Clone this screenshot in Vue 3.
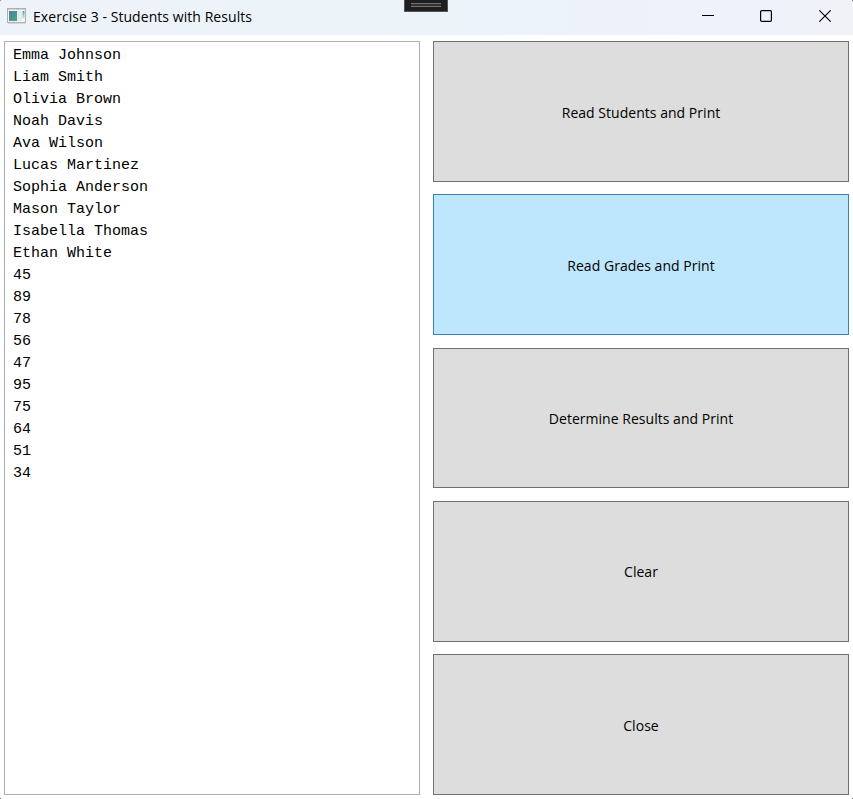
<script setup>
const lines = [
  'Emma Johnson', 'Liam Smith', 'Olivia Brown', 'Noah Davis', 'Ava Wilson',
  'Lucas Martinez', 'Sophia Anderson', 'Mason Taylor', 'Isabella Thomas', 'Ethan White',
  '45', '89', '78', '56', '47', '95', '75', '64', '51', '34',
]
const actions = [
  { label: 'Read Students and Print', cls: 'students' },
  { label: 'Read Grades and Print', cls: 'grades' },
  { label: 'Determine Results and Print', cls: 'results' },
  { label: 'Clear', cls: 'clear' },
  { label: 'Close', cls: 'close' },
]
</script>

<template>
  <div class="window">
    <header class="titlebar">
      <svg class="app-icon" width="20" height="16" viewBox="0 0 20 16">
        <defs>
          <linearGradient id="pane" x1="0" y1="0" x2="1" y2="1">
            <stop offset="0" stop-color="#4a80a8" />
            <stop offset="1" stop-color="#48a67c" />
          </linearGradient>
          <linearGradient id="strip" x1="0" y1="0" x2="0" y2="1">
            <stop offset="0" stop-color="#5a9c98" />
            <stop offset="1" stop-color="#dfeae6" />
          </linearGradient>
        </defs>
        <rect x="0.5" y="0.5" width="18" height="14" fill="#f7f8f8" stroke="#adb0b2" />
        <path d="M1 1.5h17" stroke="#cdd1d3" />
        <path d="M1 15.4h18" stroke="#c9ccd0" stroke-width="0.8" />
        <rect x="2" y="3" width="8" height="10" fill="url(#pane)" />
        <rect x="10" y="3" width="5" height="10" fill="#e6ecec" />
        <rect x="15.5" y="3" width="2" height="8" fill="url(#strip)" />
      </svg>
      <span class="title">Exercise 3 - Students with Results</span>
      <div class="controls">
        <svg width="12" height="12" viewBox="0 0 12 12"><path d="M0 5.5h12" stroke="#000" /></svg>
        <svg width="12" height="12" viewBox="0 0 12 12"><rect x="0.6" y="0.6" width="10.8" height="10.8" rx="1.2" fill="none" stroke="#000" stroke-width="1.2" /></svg>
        <svg class="close-icon" width="12" height="12" viewBox="0 0 12 12"><path d="M0.3 0.3l11.4 11.4M11.7 0.3L0.3 11.7" stroke="#000" stroke-width="1.1" /></svg>
      </div>
      <div class="grip"><i></i></div>
    </header>
    <main class="content">
      <div class="output">
        <div v-for="line in lines" :key="line" class="line">{{ line }}</div>
      </div>
      <div class="actions">
        <button v-for="a in actions" :key="a.cls" :class="['action', a.cls]"><span>{{ a.label }}</span></button>
      </div>
    </main>
    <i class="corner tl"></i>
    <i class="corner tr"></i>
    <i class="corner bl"></i>
    <i class="corner br"></i>
  </div>
</template>

<style>
body { margin: 0; background: #fff; }
</style>

<style scoped>
.window {
  position: relative;
  box-sizing: border-box;
  width: 853px;
  height: 799px;
  overflow: hidden;
  background: #fff;
  color: #000;
  font-family: "Open Sans", "Noto Sans", sans-serif;
}
.corner {
  position: absolute;
  width: 1px;
  height: 1px;
  background: #777;
}
.tl { left: 0; top: 0; background: #6fa3d0; }
.tr { right: 0; top: 0; }
.bl { left: 0; bottom: 0; }
.br { right: 0; bottom: 0; }
.titlebar {
  position: relative;
  box-sizing: border-box;
  display: flex;
  align-items: center;
  height: 35px;
  padding: 0 22px 3px 7px;
  background: linear-gradient(90deg, #eef3fa, #ecf3f9 48%, #eef2fb 85%, #f1f2f8);
}
.app-icon { margin-right: 6px; }
.title {
  font-size: 14px;
  line-height: 20px;
  letter-spacing: 0.06px;
  white-space: nowrap;
  padding-top: 1px;
}
.controls { display: flex; gap: 46px; margin-left: auto; }
.controls svg { display: block; }
.controls .close-icon { margin-left: 1px; }
.grip {
  position: absolute;
  left: 404px;
  top: 0;
  box-sizing: border-box;
  width: 44px;
  height: 12px;
  padding: 3px 6px 0;
  background: #1f1f1f;
  border: 1px solid #555;
  border-top: 0;
}
.grip i {
  display: block;
  box-sizing: border-box;
  height: 4px;
  background: #333;
  border: solid #707070;
  border-width: 1px 0;
}
.content {
  box-sizing: border-box;
  display: grid;
  grid-template-columns: 416px 416px;
  column-gap: 13px;
  height: 764px;
  padding: 6px 4px 4px;
}
.output {
  box-sizing: border-box;
  padding: 3px 8px;
  border: 1px solid #abadb3;
}
.line {
  height: 22px;
  font: 15px/22px "Courier New", "Liberation Mono", monospace;
  white-space: pre;
}
.actions {
  display: grid;
  grid-template-rows: repeat(5, 1fr);
  row-gap: 12.75px;
}
.action {
  box-sizing: border-box;
  display: flex;
  align-items: center;
  justify-content: center;
  padding: 2.6px 0 0;
  border: 1px solid #707070;
  border-radius: 0;
  background: #ddd;
  color: #000;
  font: 14px/20px "Open Sans", "Noto Sans", sans-serif;
  letter-spacing: 0.03px;
}
.grades { background: #bee6fd; border-color: #3c7fb1; }
.clear { padding-top: 1px; }
</style>
